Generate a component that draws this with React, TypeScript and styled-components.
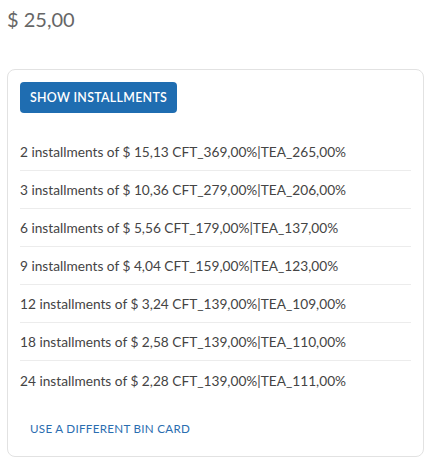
import React from "react";
import styled, { createGlobalStyle } from "styled-components";

const Global = createGlobalStyle`
  html, body { margin: 0; padding: 0; background: #fff; }
  body { font-family: "Lato", "Noto Sans", sans-serif; }
`;

const Page = styled.div`
  padding: 5px 5px 0 7px;
  width: 416px;
`;

const Price = styled.div`
  font-size: 20px;
  color: #666;
  line-height: 28px;
  height: 64px;
`;

const Card = styled.div`
  border: 1px solid #e2e2e2;
  border-radius: 8px;
  padding: 12px 12px 14px 12px;
  box-sizing: border-box;
  width: 417px;
  height: 388px;
  display: flex;
  flex-direction: column;
`;

const Button = styled.button`
  align-self: flex-start;
  background: #1f6db1;
  color: #fff;
  border: none;
  border-radius: 4px;
  height: 31px;
  padding: 0 10px;
  font-family: inherit;
  font-size: 12.4px;
  font-weight: 600;
  letter-spacing: 0.3px;
  text-transform: uppercase;
  margin-bottom: 20px;
`;

const List = styled.ul`
  list-style: none;
  margin: 0;
  padding: 0;
`;

const Row = styled.li<{ $last?: boolean }>`
  height: 38px;
  display: flex;
  align-items: center;
  font-size: 13.7px;
  color: #444;
  border-bottom: ${(p) => (p.$last ? "none" : "1px solid #ececec")};
  box-sizing: border-box;
`;

const Link = styled.a`
  margin-top: 23px;
  margin-left: 10px;
  font-size: 11.6px;
  color: #2a6db0;
  letter-spacing: 0.3px;
  text-transform: uppercase;
  text-decoration: none;
`;

const rows = [
  "2 installments of $ 15,13 CFT_369,00%|TEA_265,00%",
  "3 installments of $ 10,36 CFT_279,00%|TEA_206,00%",
  "6 installments of $ 5,56 CFT_179,00%|TEA_137,00%",
  "9 installments of $ 4,04 CFT_159,00%|TEA_123,00%",
  "12 installments of $ 3,24 CFT_139,00%|TEA_109,00%",
  "18 installments of $ 2,58 CFT_139,00%|TEA_110,00%",
  "24 installments of $ 2,28 CFT_139,00%|TEA_111,00%",
];

export default function App() {
  return (
    <Page>
      <Global />
      <Price>$ 25,00</Price>
      <Card>
        <Button>Show installments</Button>
        <List>
          {rows.map((r, i) => (
            <Row key={i} $last={i === rows.length - 1}>
              {r}
            </Row>
          ))}
        </List>
        <Link href="#">Use a different bin card</Link>
      </Card>
    </Page>
  );
}
